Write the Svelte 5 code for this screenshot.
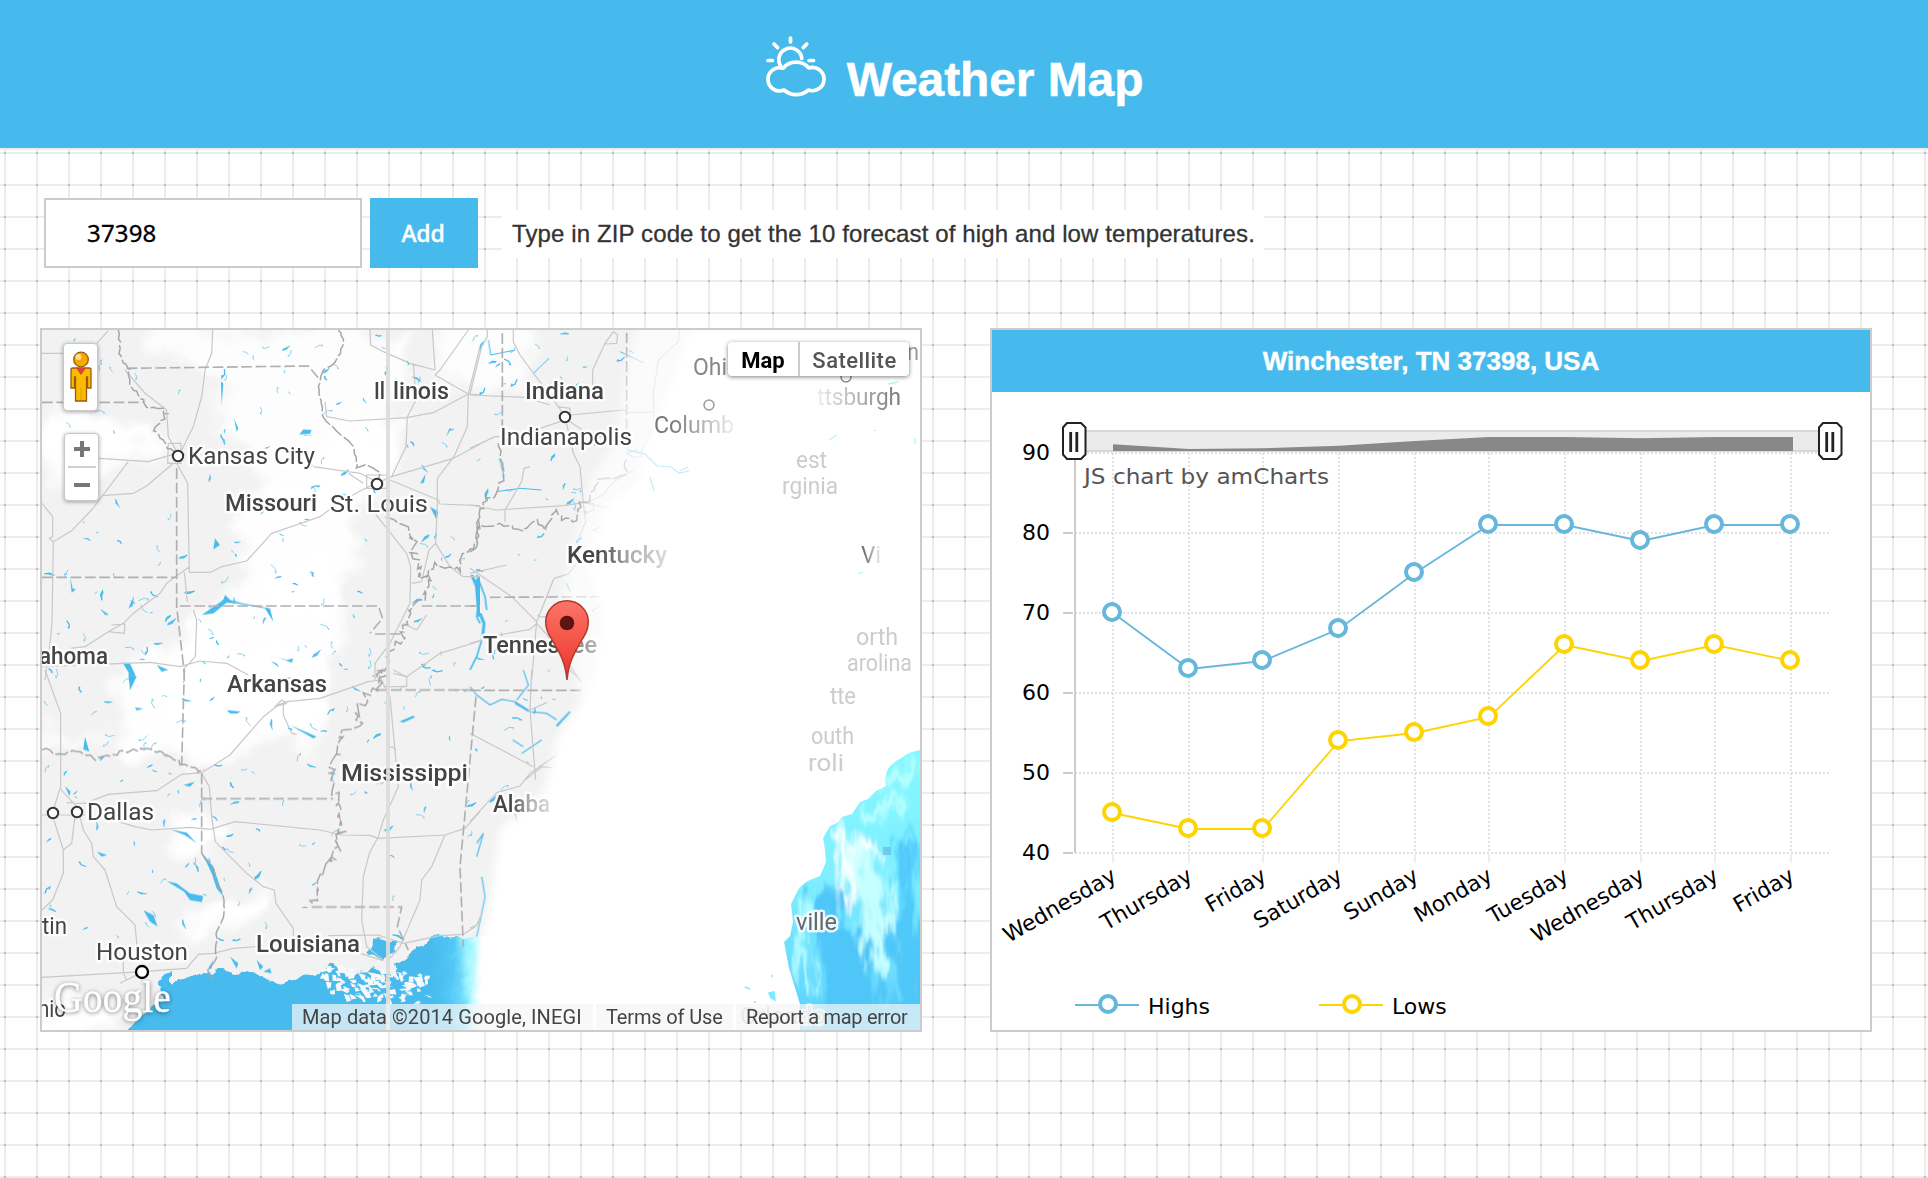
<script>
  const days = ['Wednesday', 'Thursday', 'Friday', 'Saturday', 'Sunday', 'Monday', 'Tuesday', 'Wednesday', 'Thursday', 'Friday'];
  const xs = [1113, 1189, 1263, 1339, 1415, 1489, 1565, 1641, 1715, 1791];
  const highs = [70, 63, 64, 68, 75, 81, 81, 79, 81, 81];
  const lows = [45, 43, 43, 54, 55, 57, 66, 64, 66, 64];
  const ticks = [90, 80, 70, 60, 50, 40];
  const y = (t) => 453 + (90 - t) * 8;
  const line = (s) => s.map((v, i) => `${xs[i]},${y(v)}`).join(' ');
  const series = [
    { name: 'Highs', color: '#67b7dc', values: highs, x: 1075 },
    { name: 'Lows', color: '#fdd400', values: lows, x: 1319 }
  ];
  const overview = `1113,451 ${highs.map((v, i) => `${xs[i] + (i === 9 ? 2 : 0)},${437 + (81 - v) * 0.667}`).join(' ')} 1793,451`;

  // Small deterministic generator for waterways and meandering borders.
  let seed = 41;
  const rnd = () => {
    seed = (seed * 16807) % 2147483647;
    return seed / 2147483647;
  };

  function meander(points, amp) {
    let d = `M${points[0][0]} ${points[0][1]}`;
    for (let i = 1; i < points.length; i++) {
      const [ax, ay] = points[i - 1];
      const [bx, by] = points[i];
      const n = Math.max(1, Math.round(Math.hypot(bx - ax, by - ay) / 11));
      for (let k = 1; k <= n; k++) {
        const x = ax + ((bx - ax) * k) / n + (rnd() - 0.5) * amp;
        const yy = ay + ((by - ay) * k) / n + (rnd() - 0.5) * amp;
        d += `L${x.toFixed(1)} ${yy.toFixed(1)}`;
      }
    }
    return d;
  }

  const waters = [];
  while (waters.length < 330) {
    const x = 44 + rnd() * 590;
    const yy = 334 + rnd() * 610;
    const edge = yy < 560 ? 640 - (yy - 330) * 0.15 : yy < 700 ? 590 - (yy - 560) * 0.2 : 560 - (yy - 700) * 0.45;
    if (x > edge - 6) continue;
    const a = rnd() * 6.3;
    const l = 1.5 + rnd() * 5;
    const dx = Math.cos(a) * l;
    const dy = Math.sin(a) * l;
    waters.push({
      d: `M${x.toFixed(1)} ${yy.toFixed(1)}l${dx.toFixed(1)} ${dy.toFixed(1)}l${(dx * 0.6 - dy * 0.5).toFixed(1)} ${(dy * 0.6 + dx * 0.4).toFixed(1)}l${(-dx * 0.3).toFixed(1)} ${(-dy * 0.5).toFixed(1)}`,
      w: rnd() > 0.8 ? 1.3 : 0.6,
      f: rnd() > 0.6
    });
  }

  // Low-lying islets scattered over the river delta.
  const islets = [];
  for (let i = 0; i < 130; i++) {
    const x = 318 + rnd() * 108;
    const yy = 964 + rnd() * 30 + Math.max(0, (x - 330) * 0.1);
    islets.push(`M${x.toFixed(1)} ${yy.toFixed(1)}l${(2 + rnd() * 6).toFixed(1)} ${(rnd() * 5 - 2).toFixed(1)}l${(rnd() * 4 - 1).toFixed(1)} ${(rnd() * 6).toFixed(1)}l${(-2 - rnd() * 4).toFixed(1)} ${(rnd() * 3 - 1).toFixed(1)}z`);
  }

  const meanders = {
    a: [
      meander([[265, 30], [272, 120], [300, 150], [297, 190], [330, 235], [360, 265], [400, 268], [402, 295], [370, 330], [400, 360], [410, 385], [440, 395]], 8),
      meander([[925, 30], [940, 55], [935, 90], [915, 125], [880, 150], [865, 210], [882, 295], [970, 380], [982, 445], [1010, 432], [1050, 455], [1045, 480]], 6),
      meander([[1070, 595], [1100, 610], [1145, 655], [1155, 715], [1165, 770], [1200, 770], [1190, 830], [1150, 850], [1135, 900], [1120, 950], [1090, 990], [1060, 1040], [1055, 1080]], 26),
      meander([[1350, 590], [1335, 685], [1290, 705], [1290, 750], [1215, 733], [1185, 770]], 12)
    ],
    b: [
      meander([[85, 370], [103, 470], [75, 520], [40, 550], [20, 620], [90, 610], [155, 632], [200, 600], [220, 625], [260, 570], [275, 600], [320, 600], [330, 550], [355, 545], [385, 475], [430, 480], [470, 460], [465, 420]], 12),
      meander([[20, 620], [20, 680], [0, 695]], 10)
    ],
    c: [
      meander([[36, 240], [100, 250], [120, 240], [205, 268], [300, 238], [365, 235], [470, 292], [520, 300]], 14),
      meander([[515, 550], [545, 590], [580, 680], [582, 740], [560, 790], [558, 870], [535, 900], [547, 932]], 5),
      meander([[1055, 0], [1040, 60], [1000, 80], [985, 170], [940, 200], [905, 290], [915, 400], [935, 490], [915, 560], [885, 580], [860, 660], [850, 710]], 30)
    ]
  };

  const states = [
    ['Il', 374, 399, 11], ['linois', 393, 399, 56], ['Indiana', 525, 399, 79], ['Missouri', 225, 511, 92],
    ['Arkansas', 227, 692, 100], ['Mississippi', 341, 781, 127], ['Louisiana', 256, 952, 104], ['ahoma', 39, 664, 69],
    ['Kentucky', 567, 563, 100, 'fade-mid'], ['Tennessee', 483, 653, 114, 'fade-late'], ['Alaba', 493, 812, 57, 'fade-mid']
  ];
  const cities = [
    ['Kansas City', 188, 464, 127], ['St. Louis', 330, 512, 98], ['Indianapolis', 500, 445, 132], ['Dallas', 87, 820, 67],
    ['Houston', 96, 960, 92], ['tin', 42, 934, 25], ['nio', 38, 1017, 28], ['Ohi', 693, 375, 34, 'dim'],
    ['Columb', 654, 433, 80, 'fade-dim'], ['ttsburgh', 817, 405, 84, 'fade-in'], ['n', 907, 360, 12, 'grey'],
    ['est', 796, 468, 31, 'pale'], ['rginia', 782, 494, 56, 'pale'], ['Vi', 861, 563, 20, 'fade-dim'], ['orth', 856, 645, 42, 'pale'],
    ['arolina', 847, 671, 65, 'pale'], ['tte', 830, 704, 26, 'pale'], ['outh', 811, 744, 43, 'pale'],
    ['roli', 808, 771, 36, 'pale'], ['ville', 796, 930, 41, 'mid'], ['Orlando', 740, 1024, 86, 'pale']
  ];
  const dots = [[178, 456], [377, 484], [565, 417], [53, 813], [77, 812]];
</script>

<div class="page">
  <header>
    <svg class="logo" viewBox="0 0 60 60" fill="none" stroke="#fff" stroke-width="3.7" stroke-linecap="round" stroke-linejoin="round">
      <path d="M24.5 2v4M8 8l3.6 3.6M40.8 8l-3.6 3.6M2 24.5h4.5M43 24.5h4.5M14.5 29.5A11.5 11.5 0 1 1 35.8 22.5" />
      <path d="M17 32.2A17 17 0 0 1 43 32A11.6 11.6 0 1 1 42.5 54A18.5 18.5 0 0 1 18 54A11.6 11.6 0 1 1 17 32.2Z" />
    </svg>
    <h1>Weather Map</h1>
  </header>

  <form>
    <input type="text" value="37398" />
    <button type="button">Add</button>
    <p><span>Type in ZIP code to get the 10 forecast of high and low temperatures.</span></p>
  </form>

  <main>
    <section class="map">
      <svg viewBox="42 330 878 700" class="canvas">
        <defs>
          <filter id="haze" x="-50%" y="-50%" width="200%" height="200%"><feGaussianBlur stdDeviation="5" /></filter>
          <filter id="coast" x="-5%" y="-5%" width="110%" height="110%">
            <feTurbulence type="fractalNoise" baseFrequency=".07" numOctaves="3" seed="4" />
            <feDisplacementMap in="SourceGraphic" scale="12" xChannelSelector="R" yChannelSelector="G" />
          </filter>
          <filter id="cloud" x="-20%" y="-20%" width="140%" height="140%">
            <feGaussianBlur stdDeviation="7" result="b" />
            <feTurbulence type="fractalNoise" baseFrequency=".022" numOctaves="4" seed="9" />
            <feDisplacementMap in="b" scale="55" xChannelSelector="R" yChannelSelector="G" />
          </filter>
          <filter id="swirl" x="-20%" y="-20%" width="140%" height="140%">
            <feGaussianBlur stdDeviation="3.5" result="b" />
            <feTurbulence type="fractalNoise" baseFrequency=".09 .025" numOctaves="3" seed="5" />
            <feDisplacementMap in="b" scale="36" xChannelSelector="R" yChannelSelector="G" />
          </filter>
          <linearGradient id="gulf" gradientUnits="userSpaceOnUse" x1="430" y1="0" x2="482" y2="0">
            <stop offset="0" stop-color="#47bbed" /><stop offset=".45" stop-color="#52c8f6" />
            <stop offset=".75" stop-color="#9ff5ff" /><stop offset="1" stop-color="#fff" />
          </linearGradient>
          <linearGradient id="sea" gradientUnits="userSpaceOnUse" x1="0" y1="750" x2="0" y2="1010">
            <stop offset="0" stop-color="#86f8ff" /><stop offset=".5" stop-color="#7feeff" /><stop offset="1" stop-color="#5ed3fd" />
          </linearGradient>
          <linearGradient id="fadeMid"><stop offset=".3" stop-color="#444" /><stop offset=".62" stop-color="#aaa" /><stop offset="1" stop-color="#ddd" /></linearGradient>
          <linearGradient id="fadeLate"><stop offset=".6" stop-color="#444" /><stop offset="1" stop-color="#bbb" /></linearGradient>
          <linearGradient id="fadeDim"><stop offset=".2" stop-color="#777" /><stop offset="1" stop-color="#eee" /></linearGradient>
          <linearGradient id="fadeIn"><stop offset="0" stop-color="#eee" /><stop offset="1" stop-color="#777" /></linearGradient>
          <linearGradient id="pin" x2="0" y2="1"><stop offset="0" stop-color="#fd7567" /><stop offset="1" stop-color="#ea3429" /></linearGradient>
          <clipPath id="atl"><path d="M920 750Q908 752 903 757Q893 762 888 769Q884 777 886 786L876 791L868 799L860 802L852 814L842 817L837 823L830 826L823 838L825 850L826 862L820 876L810 880Q801 884 797 892L791 904L793 922L790 936L784 942L789 968L800 1004V1030H920Z" /></clipPath>
        </defs>

        <rect x="42" y="330" width="878" height="700" fill="#f2f2f2" />
        <g fill="#fff" filter="url(#cloud)">
          <path d="M150 325H400L405 400L370 500L330 520L260 500L230 440L215 375L160 350Z" opacity=".85" />
          <path d="M40 430L70 400L100 430L110 455L70 480L40 475ZM230 590L330 560L350 630L320 760L290 720L180 760L120 755L110 680L190 640L190 610Z" opacity=".9" />
          <path d="M40 425L120 425L170 440L120 462L40 470Z" />
          <ellipse cx="240" cy="700" rx="85" ry="55" opacity=".8" /><ellipse cx="480" cy="350" rx="45" ry="45" opacity=".8" />
          <ellipse cx="300" cy="540" rx="60" ry="65" opacity=".9" /><ellipse cx="195" cy="835" rx="28" ry="26" />
          <ellipse cx="75" cy="1020" rx="60" ry="18" /><ellipse cx="225" cy="910" rx="48" ry="14" transform="rotate(-22 225 910)" />
          <ellipse cx="360" cy="460" rx="40" ry="40" opacity=".7" /><ellipse cx="60" cy="740" rx="45" ry="10" opacity=".7" />
        </g>

        <g class="water">
          {#each waters as w}
            <path d={w.d} stroke-width={w.w} fill={w.f ? '#47bbed' : 'none'} />
          {/each}
        </g>

        <g fill="url(#gulf)" filter="url(#coast)">
          <path d="M118 1040L148 1010L164 998L158 980L172 971V985L198 976L218 971L247 972L267 980L283 984L307 977L318 974L330 966L350 974L372 968L385 975L397 977L394 966L413 947L440 938L492 935V1040Z" />
          <path d="M367 950L377 939L397 943L398 953L380 960Z" />
        </g>
        {#each islets as d}<path {d} fill="#f8f8f8" />{/each}

        <g transform="translate(30 670) scale(.33333)">
          <g fill="#47bbed">
            <path d="M517 550L550 590L560 620L580 680L560 655L545 610ZM410 633L440 640L480 670L520 678L515 696L480 690L462 665ZM340 720L370 735L383 770L360 755ZM420 478L470 488L500 520L465 495ZM590 120L633 125L620 131L600 130ZM1108 155L1150 137L1155 142L1120 158ZM1060 480L1092 466L1075 488ZM532 900L550 870L545 895ZM600 860L625 880L620 895ZM105 348L122 365L118 378ZM165 200L178 245L160 238ZM315 113L340 115L320 122ZM200 545L232 555L215 560ZM780 165L860 200L850 205ZM295 10L320 20L300 60ZM680 870L700 890L690 900ZM460 345L495 335L480 350ZM700 905L720 895L725 910Z" />
          </g>
        </g>
        <g transform="translate(30 320) scale(.33333)" fill="#47bbed">
          <path d="M808 343L820 328L845 330L840 342ZM1170 490L1187 462L1182 488ZM1248 350L1258 325L1275 328L1260 332ZM550 688L555 655L570 675ZM295 865L312 828L308 858ZM515 885L580 840L585 825L600 840L640 850L720 865L730 905L705 865L620 850L590 848L550 880ZM120 770L128 805L138 808L125 818ZM278 1028L300 1030L318 1070L300 1065ZM380 1035L415 1050L395 1055ZM1200 560L1225 575L1220 600ZM612 295L625 325L620 335ZM573 185L580 190L575 255ZM210 865L237 885L225 885ZM740 1010L770 1020L790 1015L785 1028ZM1335 780L1350 770V890L1342 890Z" />
        </g>
        <g transform="translate(470 320) scale(.33333)" class="river">
          <path d="M5 765L20 800L25 850M30 880L42 910L38 950" stroke-width="9" />
          <path d="M20 765L45 830L50 870M25 850L20 890L30 910M38 950L20 1010L0 1050" stroke-width="5" />
          <path d="M80 515L150 505L215 510M88 415L102 470M370 630L410 650L390 620ZM290 790L300 815M365 875L410 840L445 770M450 95L520 128M55 60L62 105L135 90M190 160L237 115" stroke-width="3" />
        </g>
        <g transform="translate(470 670) scale(.33333)" class="river">
          <path d="M0 50L20 75L60 105L95 88L135 95L180 125L230 130L260 150M160 0L175 45L140 90M128 210L160 230M155 250L215 210M135 430L148 480M20 520L40 490L20 560M35 620L45 680L35 730L20 800" stroke-width="3.500" />
          <path d="M135 98L175 122M260 168L300 125" stroke-width="7" />
        </g>

        <g class="road">
          <path transform="translate(30 320) scale(.33333)" d="M36 100H103M200 70L235 32M548 30L545 100L525 150L515 230L490 320L455 390M285 150L345 220L410 270L415 350L440 395M208 415L355 425L440 400M430 430L350 498L310 520L218 527M295 425L185 570L125 632L70 665L58 655L68 650V590L36 550M70 665L66 910L60 970L45 1080M440 430L473 490L478 757H542L575 740L650 723L725 640L870 590L930 545L1035 490M478 740L410 790L390 820L310 880L280 910L235 935L165 980L120 985M245 915L285 912L283 940L235 935M463 757L472 845M490 870L500 900L496 1010L463 1045V1080M36 1040L360 1027L450 1040L510 1023L590 1030L655 1065M850 440L990 460L1040 485M955 460L1000 490M885 245L890 290L960 303L1130 293L1210 278L1315 222L1350 225M1020 30L1022 75L1060 95L1140 130L1215 150L1207 30M1215 165L1315 222L1350 80M1315 30L1230 150L1215 165M1150 130L1158 240L1132 290L1128 380L1085 470L1040 490M1315 222L1312 320L1272 410L1222 475V550L1217 670L1260 740L1300 770H1350M1080 480L1225 540L1230 552L1350 557M1085 470L1270 415L1350 373M1035 580L1130 700L1142 740L1140 850L1080 970L1035 1030V1080M1145 790L1175 785L1197 690L1217 670M1090 1050L1130 1070L1230 1000L1350 963M1120 910L1160 930L1190 885M415 370h38v60h-40zM1010 465h60v40h-60z" />
          <path transform="translate(470 320) scale(.33333)" d="M0 225L165 232L240 255M130 30V65L150 105L265 260L285 290M0 222L35 80L52 50V30M368 195V150L405 70L430 35L443 45L440 70L405 72M628 30L625 65L565 120L550 220L552 320L510 400M302 285L460 270L470 277H550M300 305L345 335M290 310L310 400L330 440L340 550L347 605L325 660L320 730L295 762L252 775L200 905L185 1080M0 385L75 350H95M270 305L210 325M105 570L155 485L162 445L180 440M0 555L80 570L280 557L340 548L440 568M105 570V605M345 550L400 525L425 490L490 450M0 760L110 735M0 745L30 765L125 830L200 905M0 970L85 945L180 928L200 910L245 960L330 1080M262 260L300 265L300 285M330 545L370 550L372 570L345 580M470 400L500 390L520 410L490 412Z" />
          <path transform="translate(30 670) scale(.33333)" d="M45 0L92 130V350L70 420M90 355L140 410M110 398L165 400L235 373L380 362L455 313L515 308L600 255L700 140L745 105L770 95L870 85L1015 35L1050 30M36 435H165M70 445L100 540V610L68 690L36 720M135 440L125 520L100 540M150 440L160 480L185 520L190 560L225 600L260 710L315 765L325 870M265 455L315 470L365 480L480 472L540 478L615 455L870 480L935 495L1020 496L1045 505L1245 495L1305 475L1350 425M515 310L538 350L545 440L556 515L650 610L700 650L733 660L738 700L790 775V800M36 922L340 905L470 895L505 853L550 850L610 835L700 828M270 940L340 905M760 100V135L785 190L800 193M735 110L755 90L770 100ZM1040 0L1080 80L1105 350L1060 450L1045 500L1018 550L1000 620L995 750L1010 830L1060 870M1245 495L1205 590L1175 630L1170 690L1110 830L1080 865M895 797L1045 795L1120 820L1230 797L1300 793L1335 770L1350 755M990 850L1060 872M280 870V910L290 930M1090 10L1130 20V50H1060" />
          <path transform="translate(470 670) scale(.33333)" d="M185 0L180 120L197 330M0 190L190 290M0 455L80 368L150 348L180 310L260 255M180 120L230 98M300 0L335 35M165 330L215 290L245 293M0 775L20 765L38 725" />
        </g>
        <g class="border">
          <g transform="translate(30 320) scale(.33333)">
            <path d="M440 445V860L463 1060M290 145L835 138L870 180M36 247H340M36 772H438M450 858H1045L1058 895L1020 940M1035 942H1120M1175 858H1350" />
            {#each meanders.a as d}<path {d} class="bank" />{/each}
          </g>
          <g transform="translate(470 320) scale(.33333)">
            <path d="M97 40V330M470 38V385M60 832L390 830M0 858H20" />
            {#each meanders.b as d}<path {d} class="bank" />{/each}
          </g>
          <g transform="translate(30 670) scale(.33333)">
            <path d="M463 0L455 285M515 310V550M515 386H910M845 711H1115L1102 770L1135 840M1040 60H1335M1338 80L1290 590L1300 830" />
            {#each meanders.c as d}<path {d} class="bank" />{/each}
          </g>
          <path transform="translate(470 670) scale(.33333)" d="M0 61H345" />
        </g>

        <path filter="url(#haze)" fill="#fff" d="M730 300L690 330L665 400L642 455L640 480L602 510L588 560L602 620L594 680L582 700L556 740L545 790L500 830L490 900L480 950L478 1060H960V300Z" />
        <path filter="url(#haze)" fill="#fff" opacity=".65" d="M650 300L630 345L615 440L590 480L575 540L560 600L580 700L720 700V300Z" />
        <path d="M627 450l18 4l12 12l14 1l8 6l10 -2M650 477l4 14M680 471l8 -4" fill="none" stroke="#bfeefa" stroke-width="1.200" />
        <path d="M829 440l8 -5M874 431l2 -1M915 438v6M888 384l10 -2M858 574l5 -2" stroke="#b0f3ff" stroke-width="1.300" />

        <g clip-path="url(#atl)">
          <rect x="780" y="740" width="140" height="290" fill="url(#sea)" />
          <g filter="url(#swirl)" fill="none" stroke-linecap="round">
            <path d="M885 785L915 765M870 815L900 800" stroke="#b8ffff" stroke-width="12" />
            <path d="M855 845C868 880 862 910 880 960M875 880L890 930" stroke="#c6ffff" stroke-width="16" />
            <path d="M840 835L850 875L842 900M862 845L870 850" stroke="#fbffff" stroke-width="13" />
            <path d="M910 850C900 890 915 930 925 1030M900 930L915 1030" stroke="#50c8fa" stroke-width="22" />
            <path d="M828 905C832 960 850 990 838 1035M852 945L875 1035M905 960V1035" stroke="#50c6f8" stroke-width="28" />
            <path d="M896 845L898 915M916 820V900" stroke="#62dcff" stroke-width="8" />
            <path d="M805 905L800 950L812 990" stroke="#baffff" stroke-width="9" />
            <path d="M885 940L900 1000" stroke="#79e4ff" stroke-width="6" />
          </g>
          <path d="M883 847h8v8h-8z" fill="#67c2e6" opacity=".8" />
        </g>
        <path d="M745 987l5 2M769 993l5 -1l1 8l-4 -2ZM772 975v2M755 1001v2" stroke="#80e9ff" stroke-width="1.600" fill="#80e9ff" />

        <g class="cities">
          {#each cities as [t, x, ty, w, cls]}
            <text {x} y={ty} textLength={w} lengthAdjust="spacingAndGlyphs" class={cls}>{t}</text>
          {/each}
        </g>
        <g class="states">
          {#each states as [t, x, ty, w, cls]}
            <text {x} y={ty} textLength={w} lengthAdjust="spacingAndGlyphs" class={cls}>{t}</text>
          {/each}
        </g>

        <g fill="#fff" stroke="#333" stroke-width="2">
          {#each dots as [cx, cy]}<circle {cx} {cy} r="5.2" />{/each}
          <circle cx="142" cy="972" r="6" stroke="#000" stroke-width="2.3" />
          <circle cx="709" cy="405" r="5" stroke="#999" stroke-width="1.4" />
          <circle cx="846" cy="377" r="5" stroke="#888" stroke-width="1.4" />
        </g>
        <rect x="386" y="330" width="4" height="700" fill="#dedcd8" opacity=".9" />

        <path d="M567 680C565 660 559 652 551 638C547 632 545.700 628 545.700 622A21.300 21.300 0 0 1 588.300 622C588.300 628 587 632 583 638C575 652 569 660 567 680Z" fill="url(#pin)" stroke="#b5382f" stroke-width="1.500" />
        <circle cx="567" cy="623" r="7.300" fill="#5f1411" />
        <text class="brand" x="54" y="1012" textLength="117" lengthAdjust="spacingAndGlyphs">Google</text>
      </svg>

      <div class="tools">
        <div class="pegman">
          <svg viewBox="0 0 24 52">
            <path d="M2 18q0-1 2-1h16q2 0 2 1v19h-3.500V26h-1v24h-11V26h-1v11H2Z" fill="#fabb00" stroke="#9a5a10" stroke-width="1.300" />
            <path d="M7 17h10l-5 7z" fill="#d94435" /><path d="M12 37v12" stroke="#e09c00" />
            <circle cx="12" cy="8.500" r="7.300" fill="#f9a800" stroke="#9a5a10" stroke-width="1.300" />
            <circle cx="9.500" cy="6" r="3" fill="#ffe08a" />
          </svg>
        </div>
        <div class="zoom"><i class="plus"></i><hr /><i></i></div>
      </div>
      <div class="types"><b>Map</b><span>Satellite</span></div>
      <div class="credits">
        <span class="c1">Map data ©2014 Google, INEGI</span><span class="c2">Terms of Use</span><span class="c3">Report a map error</span>
      </div>
    </section>

    <section class="chart">
      <h2>Winchester, TN 37398, USA</h2>
      <svg viewBox="992 392 878 638">
        <rect x="1075" y="430" width="754" height="22" fill="#ebebeb" />
        <path d="M1075 431H1829M1075 451H1829" stroke="#d8d8d8" stroke-width="2" />
        <polygon points={overview} fill="#888" />
        <g stroke="#e1e1e1" stroke-width="2">
          {#each ticks as t}<path d="M1075 {y(t)}H1829" stroke-dasharray="2 2" />{/each}
          {#each xs as x}<path d="M{x} 453V853" stroke-dasharray="2 2" /><path d="M{x} 853v10" stroke="#eee" />{/each}
        </g>
        <g stroke="#ccc" stroke-width="2">
          <path d="M1075 453V853" />
          {#each ticks.slice(1) as t}<path d="M1063 {y(t)}h10" />{/each}
        </g>
        {#each ticks as t}<text x="1050" y={y(t) + 6.500} text-anchor="end">{t}</text>{/each}
        <text x="1084" y="483.500" class="by" textLength="245" lengthAdjust="spacingAndGlyphs">JS chart by amCharts</text>
        {#each series as s}
          <polyline points={line(s.values)} fill="none" stroke={s.color} stroke-width="1.800" />
          {#each s.values as v, i}
            <circle cx={xs[i] - 1} cy={y(v) - 1} r="8" fill="#fff" stroke={s.color} stroke-width="4" />
          {/each}
          <path d="M{s.x} 1005h64" stroke={s.color} stroke-width="2" />
          <circle cx={s.x + 33} cy="1004" r="8" fill="#fff" stroke={s.color} stroke-width="4" />
          <text x={s.x + 73} y="1013.500">{s.name}</text>
        {/each}
        {#each days as d, i}
          <text class="day" text-anchor="end" transform="translate({xs[i] + 5} 880) rotate(-30)">{d}</text>
        {/each}
        {#each [1062, 1818] as x}
          <g transform="translate({x} 422)">
            <path d="M5 1h14l4.500 4.500v27l-4.500 4.500h-14l-4 -4.500v-27z" fill="#fff" stroke="#222" stroke-width="2" />
            <path d="M8.700 10v20M14.800 10v20" stroke="#222" stroke-width="2.800" />
          </g>
        {/each}
      </svg>
    </section>
  </main>
</div>

<style>
  :global(body) { margin: 0; overflow: hidden; }
  .page {
    box-sizing: border-box; width: 1928px; height: 1178px; overflow: hidden;
    font-family: "Liberation Sans", Arial, sans-serif;
    background:
      conic-gradient(from 0deg at 2px 2px, transparent 75%, #bdbdbd 0) 4px 24px / 32px 32px,
      linear-gradient(90deg, #ececec 2px, transparent 2px) 4px 24px / 32px 32px,
      linear-gradient(#ececec 2px, transparent 2px) 4px 24px / 32px 32px,
      #fff;
  }
  header {
    box-sizing: border-box; height: 150px; background: #46baec; border-bottom: 2px solid #eee;
    display: flex; justify-content: center; align-items: flex-start; gap: 21px; padding: 36px 19px 0 0;
  }
  .logo { width: 60px; height: 60px; overflow: visible; }
  h1 { margin: 17px 0 0; color: #fff; font-size: 48px; line-height: 54px; font-weight: 700; letter-spacing: -0.1px; -webkit-text-stroke: 0.5px #fff; }
  form { display: flex; align-items: flex-start; padding: 48px 0 0 44px; }
  input {
    box-sizing: border-box; width: 318px; height: 70px; border: 2px solid #ccc; background: #fff; outline: 0;
    padding: 0 40px 1px 41px; font: 24px "Noto Sans", sans-serif; letter-spacing: 0.15px; color: #000; -webkit-text-stroke: 0.3px #000;
  }
  button {
    width: 108px; height: 70px; margin-left: 8px; border: 0; padding: 0 2px 0 0; background: #46baec; color: #fff;
    font: 500 23px "Noto Sans", sans-serif; letter-spacing: -0.2px; -webkit-text-stroke: 0.4px #fff;
  }
  form p {
    box-sizing: border-box; width: 762px; height: 48px; margin: 12px 0 0 24px; padding: 0 0 0 10px; background: #fff;
    color: #333; font-size: 24px; line-height: 48px; white-space: nowrap; letter-spacing: 0.12px; -webkit-text-stroke: 0.3px #333;
  }
  main { display: flex; gap: 68px; padding: 60px 0 0 40px; }
  section { box-sizing: border-box; width: 882px; height: 704px; border: 2px solid #ccc; background: #fff; }
  .map { position: relative; overflow: hidden; font-family: Roboto, sans-serif; }
  .canvas { display: block; width: 878px; height: 700px; }
  .water path { stroke: #47bbed; fill-opacity: 0.9; }
  .river path { stroke: #47bbed; fill: none; }
  .road { fill: none; stroke: #c8c8c8; stroke-width: 3.6; stroke-linejoin: round; }
  .border path { fill: none; stroke: #b0b0b0; stroke-width: 5; stroke-dasharray: 32 11; }
  .border .bank { stroke: #a6a6a6; stroke-width: 4.5; stroke-dasharray: 40 8; }
  .canvas text { font-size: 24px; fill: #444; paint-order: stroke; stroke: rgba(255, 255, 255, 0.85); stroke-width: 5px; stroke-linejoin: round; }
  .states text { font-weight: 500; }
  .canvas .dim { fill: #888; }
  .canvas .mid { fill: #666; }
  .canvas .grey { fill: #999; }
  .canvas .pale { fill: #ccc; }
  .canvas .fade-mid { fill: url(#fadeMid); }
  .canvas .fade-late { fill: url(#fadeLate); }
  .canvas .fade-dim { fill: url(#fadeDim); }
  .canvas .fade-in { fill: url(#fadeIn); }
  .canvas .brand { font: 45px "Liberation Serif", serif; fill: #fff; stroke: #fff; stroke-width: 0.3px; filter: drop-shadow(0 1px 2px rgba(0, 0, 0, 0.5)); }
  .tools { position: absolute; left: 21px; top: 13px; display: flex; flex-direction: column; gap: 22px; }
  .pegman, .zoom {
    box-sizing: border-box; width: 35px; height: 68px; background: #fff; border: 1px solid #c8c8c8; border-radius: 4px;
    box-shadow: 0 1px 4px rgba(0, 0, 0, 0.35); display: flex; flex-direction: column; align-items: center; justify-content: center;
  }
  .pegman svg { width: 24px; height: 52px; }
  .zoom { margin-left: 1px; gap: 15px; }
  .zoom hr { width: 28px; border: 0; height: 2px; margin: 0; background: #d0d0d0; }
  .zoom i { width: 16px; height: 4px; background: #777; }
  .zoom .plus { height: 16px; margin: -6px 0; background: linear-gradient(#777, #777) center / 16px 4px no-repeat, linear-gradient(#777, #777) center / 4px 16px no-repeat; }
  .types {
    position: absolute; left: 686px; top: 12px; display: flex; height: 34px; background: #fff; border-radius: 4px;
    box-shadow: 0 1px 4px rgba(0, 0, 0, 0.5); font-size: 22px; line-height: 37px; color: #555;
  }
  .types b { width: 70px; text-align: center; font-weight: 700; color: #000; border-right: 2px solid #ccc; }
  .types span { width: 109px; text-align: center; letter-spacing: 0.45px; font-weight: 500; }
  .credits { position: absolute; left: 250px; bottom: 0; display: flex; gap: 3px; font-size: 20px; line-height: 26px; color: #444; white-space: nowrap; }
  .credits span { box-sizing: border-box; height: 26px; padding-left: 10px; background: rgba(245, 245, 245, 0.72); }
  .credits .c1 { width: 301px; letter-spacing: 0.1px; }
  .credits .c2 { width: 137px; letter-spacing: -0.15px; }
  .credits .c3 { width: 184px; letter-spacing: -0.3px; }
  h2 { margin: 0; height: 62px; background: #46baec; color: #fff; text-align: center; font-size: 26px; line-height: 62px; font-weight: 700; -webkit-text-stroke: 0.4px #fff; }
  .chart svg { display: block; width: 878px; height: 638px; }
  .chart text { font: 22px "DejaVu Sans", Verdana, sans-serif; fill: #000; }
  .chart .by { fill: #555; }
  .chart .day { font-size: 21.8px; }
</style>
